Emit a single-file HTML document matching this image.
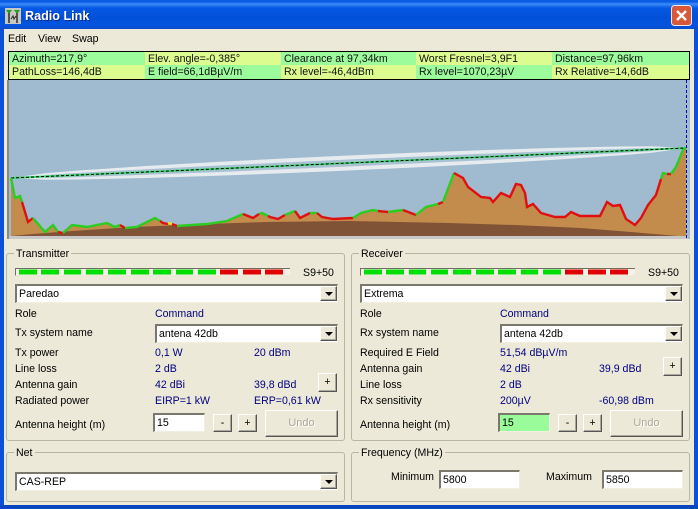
<!DOCTYPE html>
<html><head><meta charset="utf-8"><style>
html,body{margin:0;padding:0;background:#ece9d8}
#w{position:relative;width:698px;height:509px;overflow:hidden;background:#ece9d8;font:10.6px/14px "Liberation Sans",sans-serif;color:#000}
#w div{position:absolute;box-sizing:border-box;white-space:nowrap}
.t{height:14px;margin-top:1px}
.v{height:14px;margin-top:1px;color:#000080}
.cell{height:14px;padding-left:3px;line-height:14px;color:#111}
.r2{line-height:15px}
.g{background:#9cfc9c}.y{background:#dcfc90}
.grp{border:1px solid #b8b5a4;border-radius:3px}
.leg{background:#ece9d8;padding:0 2px;height:14px}
.in{background:#fff;border:1px solid #7f7d72;border-top:2px solid #7a786c;border-left:2px solid #7a786c;border-right-color:#f1efe2;border-bottom-color:#f1efe2;padding-left:2px;line-height:17px}
.ar{background:#ece9d8;border:1px solid;border-color:#fff #555 #555 #fff;box-shadow:inset -1px -1px 0 #aca899;width:17px;height:15px}
.ar:after{content:"";position:absolute;left:4px;top:5px;border:4px solid transparent;border-top:4px solid #000;border-bottom:0}
.b{background:#ece9d8;border:1px solid;border-color:#fff #555 #555 #fff;box-shadow:inset -1px -1px 0 #aca899;text-align:center;line-height:16px}
.u{color:#aca899;line-height:24px;text-shadow:1px 1px 0 #fff;font-size:11px}
polyline{stroke-width:2.4}
</style></head><body><div id="w">
<!-- frame -->
<div style="left:0;top:0;width:698px;height:29px;background:linear-gradient(#0a5ae0 0,#0a5fe8 2px,#3c8cf8 4px,#0558e4 8px,#0250d8 18px,#0454e0 25px,#0a4cc8 29px)"></div>
<div style="left:0;top:29px;width:4px;height:480px;background:#0a50d8"></div>
<div style="left:694px;top:29px;width:4px;height:480px;background:#0a50d8"></div>
<div style="left:0;top:505px;width:698px;height:4px;background:#0a45c0"></div>
<svg style="position:absolute;left:5px;top:8px" width="16" height="16" viewBox="0 0 16 16"><rect width="16" height="16" fill="#c8c8c0"/><path d="M1 2h6L4 6zM9 2h6l-3 4z" fill="#20a020"/><path d="M4 5v10M12 5v10" stroke="#222" stroke-width="1.4"/><path d="M6 11l2-3 1 3 2-3" stroke="#222" fill="none"/></svg>
<div style="left:25px;top:8px;height:16px;color:#fff;font:bold 12.6px/16px 'Liberation Sans',sans-serif;text-shadow:1px 1px 0 #0a2a90">Radio Link</div>
<svg style="position:absolute;left:671px;top:5px" width="21" height="21" viewBox="0 0 21 21"><rect x=".5" y=".5" width="20" height="20" rx="3" fill="#d8583a" stroke="#f0e8e8"/><path d="M6 6l9 9M15 6l-9 9" stroke="#fff" stroke-width="2.4"/></svg>
<!-- menu -->
<div class="t" style="left:8px;top:31px">Edit</div>
<div class="t" style="left:38px;top:31px">View</div>
<div class="t" style="left:72px;top:31px">Swap</div>
<!-- info -->
<div style="left:8px;top:51px;width:682px;height:29px;background:#000"></div>
<div class="cell g" style="left:9px;top:52px;width:136px">Azimuth=217,9°</div>
<div class="cell y" style="left:145px;top:52px;width:136px">Elev. angle=-0,385°</div>
<div class="cell g" style="left:281px;top:52px;width:135px">Clearance at 97,34km</div>
<div class="cell y" style="left:416px;top:52px;width:136px">Worst Fresnel=3,9F1</div>
<div class="cell g" style="left:552px;top:52px;width:137px">Distance=97,96km</div>
<div class="cell y r2" style="left:9px;top:65px;width:136px">PathLoss=146,4dB</div>
<div class="cell g r2" style="left:145px;top:65px;width:136px">E field=66,1dBµV/m</div>
<div class="cell y r2" style="left:281px;top:65px;width:135px">Rx level=-46,4dBm</div>
<div class="cell g r2" style="left:416px;top:65px;width:136px">Rx level=1070,23µV</div>
<div class="cell y r2" style="left:552px;top:65px;width:137px">Rx Relative=14,6dB</div>
<!-- chart -->
<svg style="position:absolute;left:7px;top:80px" width="683" height="161" viewBox="7 80 683 161">
<rect x="7" y="80" width="683" height="161" fill="#a0bbcf"/>
<rect x="7" y="80" width="2" height="161" fill="#8a8a80"/>
<rect x="9" y="236" width="679" height="5" fill="#c8c8c8"/>
<rect x="7" y="239" width="683" height="2" fill="#ece9d8"/>
<polygon fill="#c48c4c" points="11,178 15,198 20,196 22,202 28,222 33,218 45,232 53,225 58,232 63,233 72,225 87,227 107,223 115,227 120,225 125,228 137,227 155,218 163,223 170,224 177,226 207,224 227,221 243,214 253,218 262,213 270,217 278,219 285,215 295,211 300,218 310,213 317,213 322,217 333,219 350,219 353,218 361,213 373,210 378,211 388,212 403,210 416,215 426,207 438,204 443,202 454,173 463,178 468,187 481,197 490,198 493,202 501,193 510,197 516,184 521,185 525,193 527,207 533,204 541,213 555,217 565,217 571,212 580,216 600,216 607,202 613,206 620,205 626,219 635,225 641,218 648,205 656,195 663,173 671,174 676,167 683,150 686,148 686,236 11,236"/>
<polygon fill="#805236" points="11,236 33,234 72,231 133,227 207,224 267,222 348,221 448,223 515,225 581,228 631,232 678,236"/>
<!-- fresnel lens -->
<polygon fill="#e6ebef" points="11,178 45,173.2 78.5,170.5 146,166 213.5,162.1 281,158.65 348.5,155.5 416,152.65 483.5,150.1 551,148 618.5,146.5 652,146.2 686,148 652,152.8 618.5,155.5 551,160 483.5,163.9 416,167.35 348.5,170.5 281,173.35 213.5,175.9 146,178 78.5,179.5 45,179.8"/>
<polygon fill="#a8c1d3" points="45,175 78.5,172.9 146,169.2 213.5,165.8 281,162.6 348.5,159.5 416,156.6 483.5,153.8 551,151.2 618.5,148.9 652,148 652,151 618.5,153.1 551,156.8 483.5,160.2 416,163.4 348.5,166.5 281,169.4 213.5,172.2 146,174.8 78.5,177.1 45,178"/>
<polyline fill="none" stroke="#40d870" style="stroke-width:2" points="11,178 686,148"/>
<polyline fill="none" stroke="#000" style="stroke-width:1" stroke-dasharray="3 2" points="11,178 686,148"/>
<!-- ground line -->
<polyline fill="none" stroke="#2ccc20" points="11,178 15,198 20,196 22,202"/>
<polyline fill="none" stroke="#e01010" points="22,202 28,222 33,218"/>
<polyline fill="none" stroke="#2ccc20" points="33,218 45,232 53,225 58,232"/>
<polyline fill="none" stroke="#e01010" points="58,232 63,233"/>
<polyline fill="none" stroke="#2ccc20" points="63,233 72,225 87,227 107,223 115,227 120,225"/>
<polyline fill="none" stroke="#e01010" points="120,225 125,228"/>
<polyline fill="none" stroke="#2ccc20" points="125,228 137,227 155,218 160,221"/>
<polyline fill="none" stroke="#e01010" points="160,221 163,223 168,224"/>
<polyline fill="none" stroke="#f8e020" points="168,223 172,224"/>
<polyline fill="none" stroke="#e01010" points="172,224 177,226"/>
<polyline fill="none" stroke="#2ccc20" points="177,226 207,224 227,221 243,214"/>
<polyline fill="none" stroke="#e01010" points="243,214 253,218 259,214"/>
<polyline fill="none" stroke="#2ccc20" points="259,214 262,213 268,216"/>
<polyline fill="none" stroke="#e01010" points="268,216 270,217 278,219 285,215"/>
<polyline fill="none" stroke="#2ccc20" points="285,215 295,211"/>
<polyline fill="none" stroke="#e01010" points="295,211 300,218 310,213"/>
<polyline fill="none" stroke="#2ccc20" points="310,213 317,213"/>
<polyline fill="none" stroke="#e01010" points="317,213 322,217 333,219 353,218"/>
<polyline fill="none" stroke="#2ccc20" points="353,218 361,213 373,210 378,211"/>
<polyline fill="none" stroke="#e01010" points="378,211 388,212"/>
<polyline fill="none" stroke="#2ccc20" points="388,212 403,210"/>
<polyline fill="none" stroke="#e01010" points="403,210 416,215"/>
<polyline fill="none" stroke="#2ccc20" points="416,215 426,207 438,204"/>
<polyline fill="none" stroke="#e01010" points="438,204 443,202"/>
<polyline fill="none" stroke="#2ccc20" points="443,202 454,173"/>
<polyline fill="none" stroke="#e01010" points="454,173 463,178 468,187 481,197 490,198 493,202 501,193 510,197 516,184 521,185 525,193 527,207 533,204 541,213 555,217 565,217 571,212 580,216 600,216 607,202 613,206 620,205 626,219 635,225 641,218 648,205 656,195 661,179"/>
<polyline fill="none" stroke="#2ccc20" points="661,179 663,173 667,174"/>
<polyline fill="none" stroke="#e01010" points="667,174 671,174"/>
<polyline fill="none" stroke="#2ccc20" points="671,174 676,167 683,150 686,148"/>
<line x1="686.5" y1="80" x2="686.5" y2="239" stroke="#0000c0" stroke-dasharray="3 2"/>
</svg>

<!-- Transmitter -->
<div class="grp" style="left:6px;top:253px;width:339px;height:188px"></div>
<div class="t leg" style="left:14px;top:246px">Transmitter</div>
<div style="left:15px;top:268px;width:275px;height:8px;background:#f4f2e8;border-top:1px solid #716f64;border-left:1px solid #716f64;border-bottom:1px solid #ece9d8"></div>
<svg style="position:absolute;left:15px;top:266px" width="275" height="12"><g transform="translate(-15,-266)" fill="#00e000"><rect x="19" y="269.5" width="18" height="5"/><rect x="41" y="269.5" width="18" height="5"/><rect x="64" y="269.5" width="17" height="5"/><rect x="86" y="269.5" width="17" height="5"/><rect x="108" y="269.5" width="18" height="5"/><rect x="131" y="269.5" width="18" height="5"/><rect x="153" y="269.5" width="18" height="5"/><rect x="176" y="269.5" width="17" height="5"/><rect x="198" y="269.5" width="18" height="5"/><g fill="#e00000"><rect x="220" y="269.5" width="18" height="5"/><rect x="243" y="269.5" width="18" height="5"/><rect x="265" y="269.5" width="18" height="5"/></g></g></svg>
<div class="t" style="left:303px;top:265px">S9+50</div>
<div class="in" style="left:15px;top:284px;width:323px;height:19px">Paredao</div><div class="ar" style="left:320px;top:286px"></div>
<div class="t" style="left:15px;top:306px">Role</div><div class="v" style="left:155px;top:306px">Command</div>
<div class="t" style="left:15px;top:325px">Tx system name</div>
<div class="in" style="left:155px;top:324px;width:183px;height:19px">antena 42db</div><div class="ar" style="left:320px;top:326px"></div>
<div class="t" style="left:15px;top:345px">Tx power</div><div class="v" style="left:155px;top:345px">0,1 W</div><div class="v" style="left:254px;top:345px">20 dBm</div>
<div class="t" style="left:15px;top:361px">Line loss</div><div class="v" style="left:155px;top:361px">2 dB</div>
<div class="t" style="left:15px;top:377px">Antenna gain</div><div class="v" style="left:155px;top:377px">42 dBi</div><div class="v" style="left:254px;top:377px">39,8 dBd</div>
<div class="b" style="left:318px;top:373px;width:19px;height:19px">+</div>
<div class="t" style="left:15px;top:393px">Radiated power</div><div class="v" style="left:155px;top:393px">EIRP=1 kW</div><div class="v" style="left:254px;top:393px">ERP=0,61 kW</div>
<div class="t" style="left:15px;top:417px">Antenna height (m)</div>
<div class="in" style="left:153px;top:413px;width:52px;height:19px">15</div>
<div class="b" style="left:213px;top:414px;width:19px;height:18px">-</div>
<div class="b" style="left:238px;top:414px;width:19px;height:18px">+</div>
<div class="b u" style="left:265px;top:410px;width:73px;height:27px">Undo</div>

<!-- Net -->
<div class="grp" style="left:6px;top:452px;width:339px;height:50px"></div>
<div class="t leg" style="left:14px;top:445px">Net</div>
<div class="in" style="left:15px;top:472px;width:323px;height:19px">CAS-REP</div><div class="ar" style="left:320px;top:474px"></div>

<!-- Receiver -->
<div class="grp" style="left:351px;top:253px;width:339px;height:188px"></div>
<div class="t leg" style="left:359px;top:246px">Receiver</div>
<div style="left:360px;top:268px;width:275px;height:8px;background:#f4f2e8;border-top:1px solid #716f64;border-left:1px solid #716f64;border-bottom:1px solid #ece9d8"></div>
<svg style="position:absolute;left:360px;top:266px" width="275" height="12"><g transform="translate(-15,-266)" fill="#00e000"><rect x="19" y="269.5" width="18" height="5"/><rect x="41" y="269.5" width="18" height="5"/><rect x="64" y="269.5" width="17" height="5"/><rect x="86" y="269.5" width="17" height="5"/><rect x="108" y="269.5" width="18" height="5"/><rect x="131" y="269.5" width="18" height="5"/><rect x="153" y="269.5" width="18" height="5"/><rect x="176" y="269.5" width="17" height="5"/><rect x="198" y="269.5" width="18" height="5"/><g fill="#e00000"><rect x="220" y="269.5" width="18" height="5"/><rect x="243" y="269.5" width="18" height="5"/><rect x="265" y="269.5" width="18" height="5"/></g></g></svg>
<div class="t" style="left:648px;top:265px">S9+50</div>
<div class="in" style="left:360px;top:284px;width:323px;height:19px">Extrema</div><div class="ar" style="left:665px;top:286px"></div>
<div class="t" style="left:360px;top:306px">Role</div><div class="v" style="left:500px;top:306px">Command</div>
<div class="t" style="left:360px;top:325px">Rx system name</div>
<div class="in" style="left:500px;top:324px;width:183px;height:19px">antena 42db</div><div class="ar" style="left:665px;top:326px"></div>
<div class="t" style="left:360px;top:345px">Required E Field</div><div class="v" style="left:500px;top:345px">51,54 dBµV/m</div>
<div class="t" style="left:360px;top:361px">Antenna gain</div><div class="v" style="left:500px;top:361px">42 dBi</div><div class="v" style="left:599px;top:361px">39,9 dBd</div>
<div class="b" style="left:663px;top:357px;width:19px;height:19px">+</div>
<div class="t" style="left:360px;top:377px">Line loss</div><div class="v" style="left:500px;top:377px">2 dB</div>
<div class="t" style="left:360px;top:393px">Rx sensitivity</div><div class="v" style="left:500px;top:393px">200µV</div><div class="v" style="left:599px;top:393px">-60,98 dBm</div>
<div class="t" style="left:360px;top:417px">Antenna height (m)</div>
<div class="in" style="left:498px;top:413px;width:52px;height:19px;background:#99fb99">15</div>
<div class="b" style="left:558px;top:414px;width:19px;height:18px">-</div>
<div class="b" style="left:583px;top:414px;width:19px;height:18px">+</div>
<div class="b u" style="left:610px;top:410px;width:73px;height:27px">Undo</div>

<!-- Frequency -->
<div class="grp" style="left:351px;top:452px;width:339px;height:50px"></div>
<div class="t leg" style="left:359px;top:445px">Frequency (MHz)</div>
<div class="t" style="left:391px;top:469px">Minimum</div>
<div class="in" style="left:439px;top:470px;width:81px;height:19px">5800</div>
<div class="t" style="left:546px;top:469px">Maximum</div>
<div class="in" style="left:602px;top:470px;width:81px;height:19px">5850</div>
</div></body></html>
